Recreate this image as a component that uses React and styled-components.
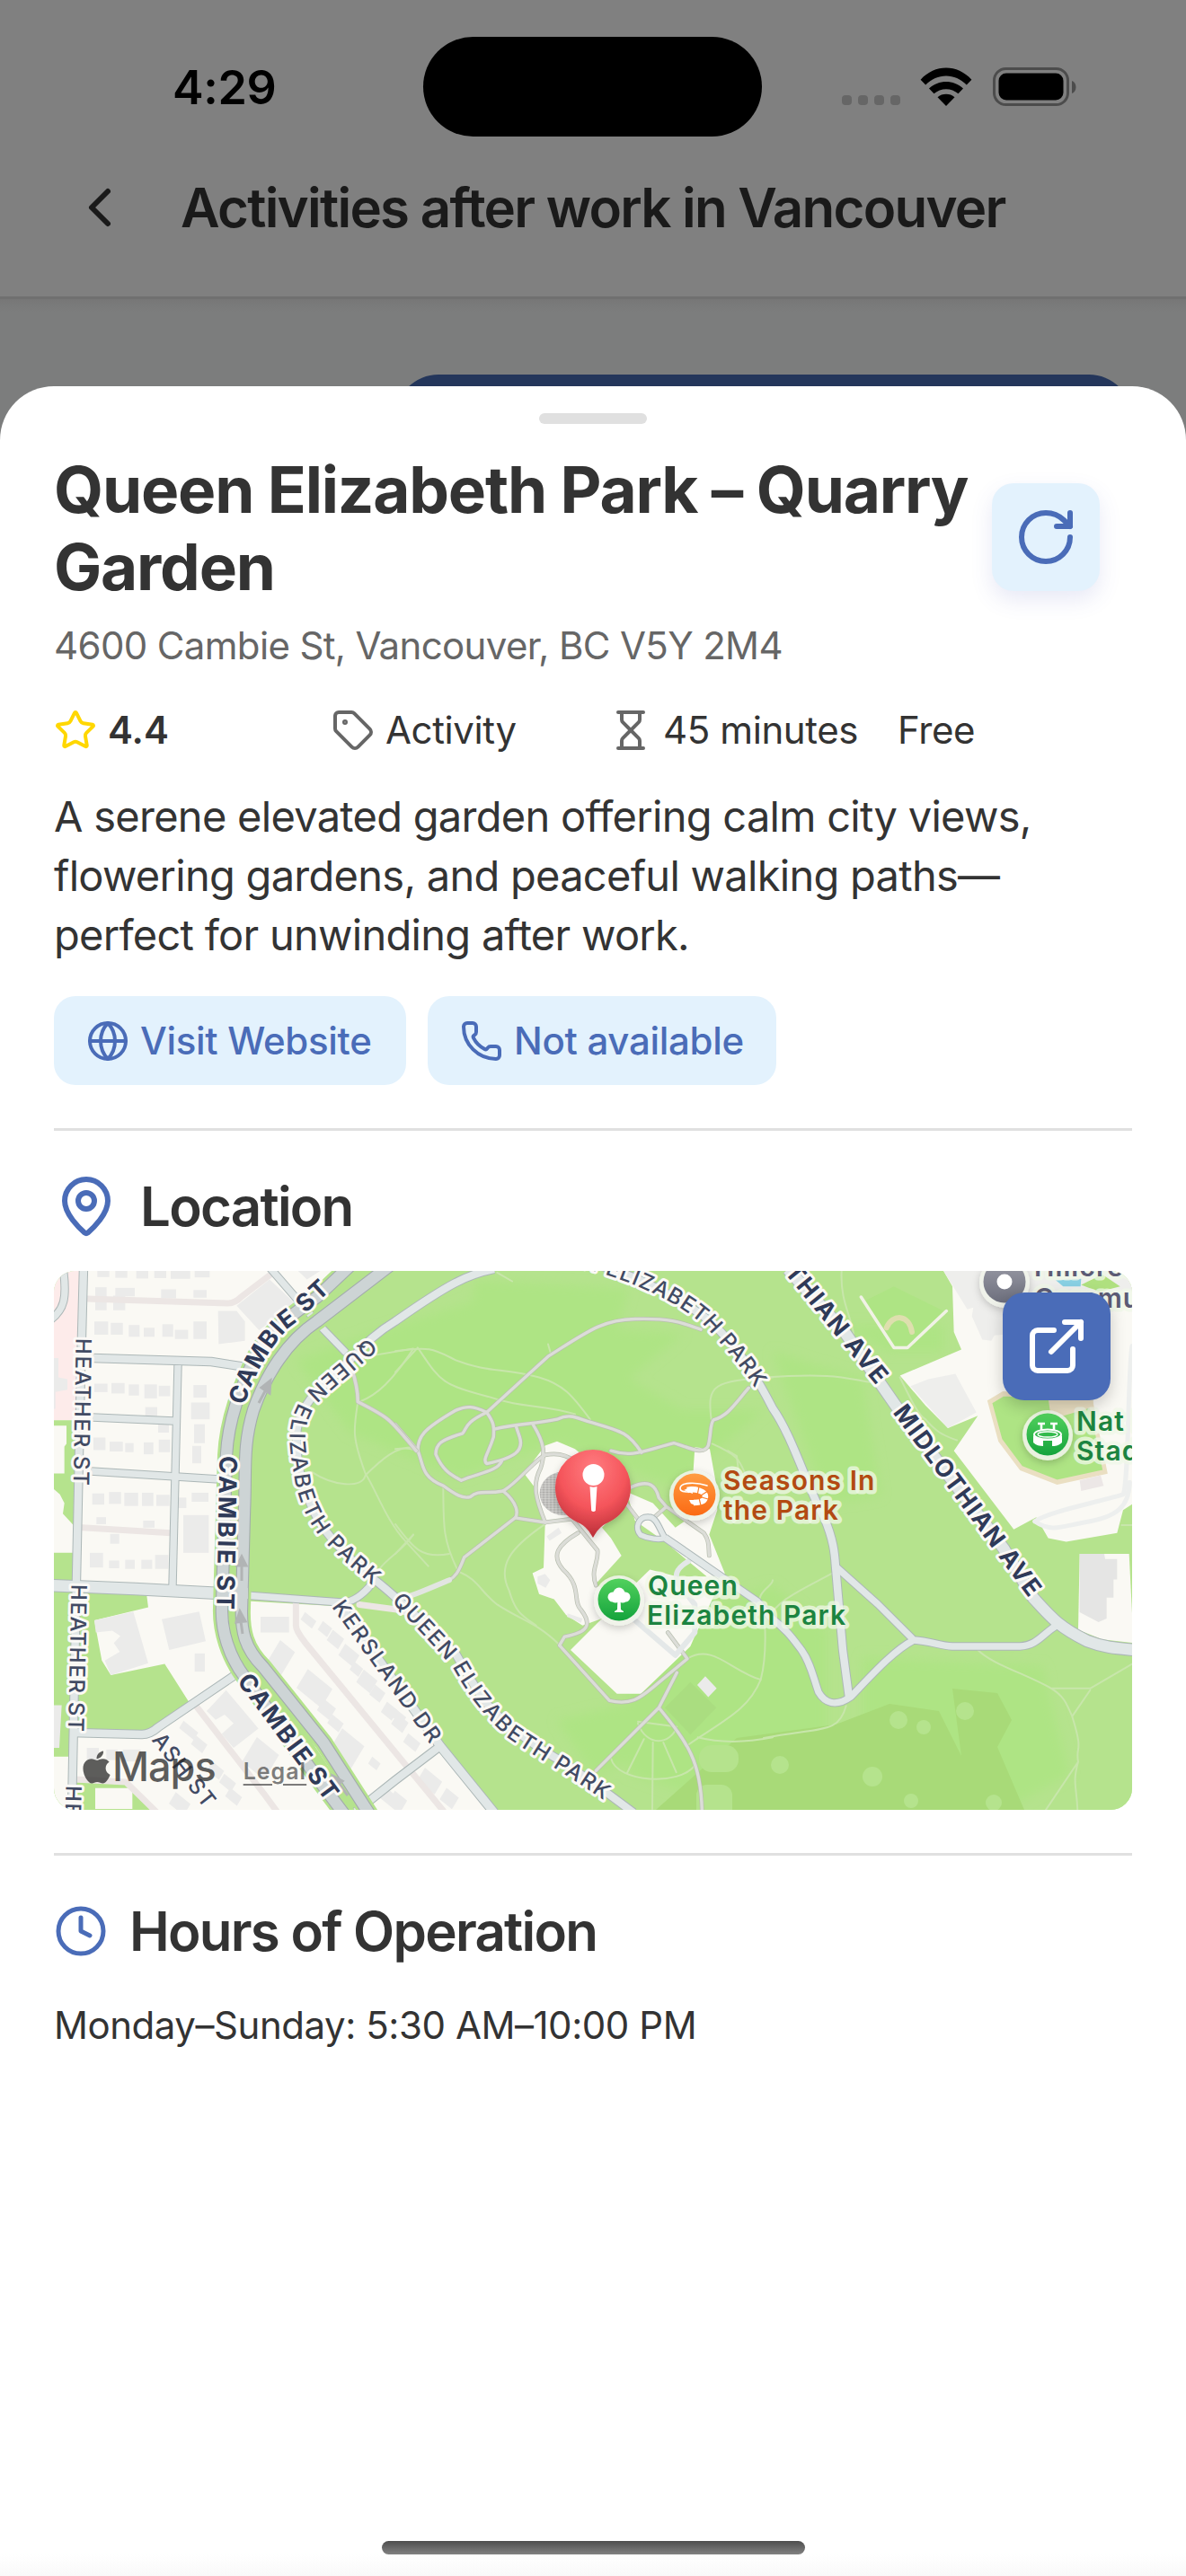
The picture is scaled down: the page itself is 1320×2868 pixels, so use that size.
import React from "react";
import styled, { createGlobalStyle } from "styled-components";
import {
  ChevronLeft,
  RotateCw,
  Star,
  Tag,
  Hourglass,
  Globe,
  Phone,
  MapPin,
  Clock,
  ExternalLink,
} from "lucide-react";
import { FaApple } from "react-icons/fa";

const GlobalStyle = createGlobalStyle`
  *, *::before, *::after { box-sizing: border-box; }
  body {
    margin: 0;
    background: #fff;
    font-family: Inter, "Liberation Sans", sans-serif;
    -webkit-font-smoothing: antialiased;
  }
  h1, h2, p { margin: 0; }
  button { font: inherit; border: 0; padding: 0; }
`;

const Screen = styled.div`
  width: 1320px;
  height: 2868px;
  display: flex;
  flex-direction: column;
  overflow: hidden;
  background: #7c7d7d;
`;

const StatusBar = styled.div`
  height: 193px;
  display: flex;
  align-items: flex-start;
  padding: 41px 121px 0 192px;
  background: #808080;
`;

const Time = styled.div`
  width: 279px;
  padding-top: 26px;
  font-size: 52px;
  line-height: 62px;
  font-weight: 600;
  letter-spacing: -0.4px;
  color: #000;
`;

const Island = styled.div`
  width: 377px;
  height: 111px;
  border-radius: 56px;
  background: #000;
`;

const Indicators = styled.div`
  flex: 1;
  display: flex;
  justify-content: flex-end;
  align-items: flex-end;
  height: 77px;
`;

const SignalDots = styled.div`
  display: flex;
  gap: 7px;
  margin-right: 22px;
  padding-bottom: 1px;
`;

const Dot = styled.span`
  width: 11px;
  height: 11px;
  border-radius: 4px;
  background: #666;
`;

const Battery = styled.svg`
  margin-left: 23px;
`;

const NavHeader = styled.header`
  height: 140px;
  display: flex;
  align-items: flex-start;
  gap: 54px;
  padding: 2px 75px 0;
  background: #808080;
  border-bottom: 3px solid #707070;
  color: #1a1a1a;
`;

const NavTitle = styled.h1`
  font-size: 60px;
  line-height: 72px;
  font-weight: 600;
  letter-spacing: -1.75px;
  white-space: nowrap;
`;

const Conversation = styled.div`
  height: 157px;
  padding: 84px 60px 0;
  display: flex;
  justify-content: flex-end;
  background: linear-gradient(#777 0, #7c7d7d 14px);
`;

const Bubble = styled.div`
  width: 820px;
  height: 73px;
  border-radius: 48px 48px 0 0;
  background: #24365b;
`;

const Sheet = styled.main`
  position: relative;
  flex: 1;
  margin-top: -60px;
  padding: 30px 60px 0;
  border-radius: 60px 60px 0 0;
  display: flex;
  flex-direction: column;
  background: linear-gradient(#fff calc(100% - 24px), #f9f9f9);
  color: #333;
`;

const Handle = styled.div`
  align-self: center;
  width: 120px;
  height: 12px;
  border-radius: 6px;
  background: #e0e0e0;
`;

const TitleRow = styled.div`
  display: flex;
  align-items: flex-start;
  justify-content: space-between;
  margin: 30px 36px 0 0;
`;

const PlaceTitle = styled.h2`
  width: 1040px;
  font-size: 71px;
  line-height: 86px;
  font-weight: 700;
  letter-spacing: -1.2px;
  white-space: nowrap;
`;

const RefreshButton = styled.button`
  width: 120px;
  height: 120px;
  margin-top: 36px;
  display: grid;
  place-items: center;
  border-radius: 24px;
  background: #e3f2fd;
  color: #4a6cb8;
  box-shadow: 0 10px 24px rgba(74, 88, 184, 0.13);
`;

const Address = styled.p`
  margin-top: 20px;
  font-size: 42px;
  line-height: 50px;
  color: #666;
  letter-spacing: -0.65px;
`;

const MetaRow = styled.div`
  display: flex;
  margin-top: 45px;
`;

const MetaItem = styled.div`
  flex: none;
  width: 309px;
  height: 48px;
  display: flex;
  align-items: center;
  color: ${(p) => p.$tint || "#666"};
  white-space: nowrap;
  svg { flex: none; }
  &:last-child { width: 213px; }
`;

const MetaText = styled.span`
  margin-left: 12px;
  font-size: 42px;
  line-height: 48px;
  font-weight: ${(p) => (p.$strong ? 600 : 400)};
  letter-spacing: ${(p) => (p.$strong ? 0 : -0.4)}px;
  color: #333;
`;

const Description = styled.p`
  margin-top: 39px;
  font-size: 47px;
  line-height: 66px;
  letter-spacing: -0.72px;
  white-space: nowrap;
`;

const Actions = styled.div`
  display: flex;
  gap: 24px;
  margin-top: 35px;
`;

const ActionButton = styled.button`
  width: ${(p) => p.$width}px;
  height: 99px;
  display: flex;
  align-items: center;
  gap: 12px;
  padding: 0 36px;
  border-radius: 24px;
  background: #e3f2fd;
  color: #4a6cb8;
  font-size: 42px;
  font-weight: 500;
  letter-spacing: -0.3px;
  white-space: nowrap;
  svg { flex: none; }
`;

const Divider = styled.hr`
  width: 100%;
  height: 3px;
  margin: 48px 0;
  border: 0;
  flex: none;
  background: #e0e0e0;
`;

const SectionHeading = styled.div`
  height: 72px;
  display: flex;
  align-items: center;
  gap: 24px;
  svg { flex: none; color: #4a6cb8; }
`;

const SectionTitle = styled.h2`
  font-size: 60px;
  line-height: 72px;
  font-weight: 600;
  letter-spacing: -1.75px;
`;

const MapCard = styled.div`
  position: relative;
  flex: none;
  height: 600px;
  margin-top: 36px;
  border-radius: 24px;
  overflow: hidden;
  background: #b5e38d;
  > svg { display: block; }
`;

const OpenButton = styled.button`
  position: absolute;
  top: 24px;
  right: 24px;
  width: 120px;
  height: 120px;
  display: grid;
  place-items: center;
  border-radius: 24px;
  background: #4a6cb8;
  color: #fff;
  box-shadow: 0 6px 18px rgba(0, 0, 0, 0.2);
`;

const Attribution = styled.div`
  position: absolute;
  left: 27px;
  bottom: 21px;
  display: flex;
  align-items: center;
  color: rgba(40, 40, 40, 0.75);
`;

const MapsWord = styled.span`
  margin-left: -3px;
  font-size: 45px;
  line-height: 54px;
  font-weight: 500;
  letter-spacing: -1px;
`;

const Legal = styled.span`
  margin: 9px 0 0 31px;
  font-size: 25px;
  line-height: 32px;
  font-weight: 600;
  letter-spacing: 1px;
  text-decoration: underline;
  text-underline-offset: 5px;
  color: rgba(70, 70, 70, 0.7);
`;

const Hours = styled.p`
  margin-top: 44px;
  font-size: 42px;
  line-height: 50px;
  letter-spacing: -0.45px;
`;

const HomeIndicator = styled.div`
  align-self: center;
  width: 471px;
  height: 15px;
  margin: auto 0 24px;
  border-radius: 8px;
  background: linear-gradient(#4d4d4d, #828282);
`;

const MapDrawing = styled.svg`
  font-family: Inter, "Liberation Sans", sans-serif;
  .thin path, .thin polyline { fill: none; vector-effect: non-scaling-stroke; stroke-linecap: round; stroke-linejoin: round; }
  .roads path { fill: none; stroke-linecap: butt; stroke-linejoin: round; }
`;

const StreetName = styled.text`
  font-size: ${(p) => (p.$major ? 27 : 24)}px;
  font-weight: ${(p) => (p.$major ? 650 : 500)};
  fill: ${(p) => (p.$major ? "#2f3a58" : "#414a63")};
  letter-spacing: ${(p) => p.$track ?? 2}px;
  stroke: #fbf9f6;
  stroke-width: 6px;
  stroke-linejoin: round;
  paint-order: stroke;
`;

const PoiName = styled.text`
  font-size: 30px;
  font-weight: 600;
  letter-spacing: 1.1px;
  fill: ${(p) => p.$color};
  stroke: rgba(240, 248, 232, 0.76);
  stroke-width: 9px;
  stroke-linejoin: round;
  paint-order: stroke;
`;

const WEST = "translate(0 -6) scale(.33333 .3891)";
const CENTER = "translate(380 -6) scale(.33333 .3891)";
const EAST = "translate(790 -6) scale(.33333 .3891)";

const localRoads = [
  ["M10 -5 C15 30 12 44 -6 56", 8],
  ["M33 -4 L30 110 L25 344 L20 602", 9],
  ["M43 97 L175 101 L240 111", 9],
  ["M43 163 L133 167", 8],
  ["M41 223 L184 232", 8],
  ["M138 105 L132 351", 8],
  ["M-4 350 L90 354 L185 359", 13],
  ["M20 514 L98 516 Q107 516 116 508 L200 451", 9],
  ["M240 -4 L297 62 L325 91", 8],
  ["M212 361 L320 369 Q338 370 358 343", 8],
  ["M318 372 L430 529 L490 603", 10],
  ["M430 529 L380 567 L336 602", 9],
  ["M490 -2 C460 4 440 14 380 56 C350 74 340 90 310 118 C284 140 270 160 270 185 C270 215 276 240 286 260 C297 290 330 322 357 344 C385 365 412 394 447 426 C460 448 470 468 487 488 C510 512 545 535 567 547 L610 577 L645 603", 9],
  ["M600 -8 C650 5 700 32 733 58 C758 84 776 106 800 153 C822 184 838 240 857 274 C868 300 869 315 870 329 L878 422 L885 475", 9],
  ["M870 329 L917 371 L957 411 C975 412 985 417 1000 418 L1075 418 C1095 417 1100 404 1117 394", 8],
  ["M957 411 C935 422 910 450 887 474 C870 486 858 481 851 469 C845 452 842 436 832 422 C822 409 816 400 798 386 L783 368 L680 297", 8],
  ["M817 -2 L880 68 L937 150 L1057 309 L1090 364 C1110 386 1118 396 1150 412 C1168 419 1180 420 1204 422", 13],
  ["M680 297 C675 300 661 298 653 294 C646 287 650 273 662 274 C671 274 674 288 680 297", 6],
];

const cambie = [
  "M330 -6 L293 29 C260 52 238 68 224 96 C208 130 194 165 192 205 L190 270 L187 375 C186 400 195 430 213 453 L300 574 L324 606",
  "M374 -6 L293 56 C260 78 236 115 222 155 C210 195 214 220 212 266 L209 375 C208 400 212 420 233 441 L300 525 L352 606",
];

const parkPaths = [
  "M0 455 L75 530 C95 570 85 605 160 630 C200 655 225 668 250 662 C280 640 300 655 360 645 C410 620 460 560 500 542 C540 535 570 540 600 560 M720 530 C790 550 830 530 930 508 C980 520 1030 545 1045 515 C1055 480 1050 455 1062 442 C1110 430 1130 400 1180 350",
  "M75 530 C75 490 90 470 200 415 C240 400 260 402 305 420 C330 450 330 460 328 490 C310 540 290 555 305 567 C400 550 430 530 415 490 L403 460",
  "M305 420 C230 450 240 465 225 480 C150 500 135 510 135 540 C160 590 190 600 220 615 C270 595 340 590 355 560 M330 468 C420 450 460 455 540 440 C590 420 610 440 660 450 C760 475 780 480 822 535",
  "M305 420 L510 260 C640 190 690 155 800 153 C930 150 960 165 1020 183",
  "M460 455 C500 510 500 540 485 580 C455 630 470 670 500 735 M360 645 C410 680 410 710 400 722 L230 835 C210 880 200 890 180 900",
  "M400 722 L500 735 L590 725 L675 815 C680 850 650 870 670 915 M610 765 C540 800 520 830 560 870 C625 920 590 960 620 985 C660 1030 640 1050 565 1062 L548 1087 L715 1245 C790 1260 820 1235 870 1200 L975 1125 L910 1050",
  "M785 635 C850 610 870 630 880 665 L905 690 L1030 765 C1050 790 1045 805 1048 830 M905 690 L865 720 M770 680 L810 725",
  "M940 1165 L880 1265 L670 1445 M880 1265 C980 1370 1020 1420 1024 1560",
];

const footpaths = [
  "M0 245 C120 230 130 240 200 270 C320 310 350 290 480 320 C560 340 590 370 650 440",
  "M75 235 C150 330 150 340 310 375 C430 410 480 395 600 425 M75 235 L0 305",
  "M0 525 C40 520 70 525 80 540 M160 630 C160 750 160 790 210 875 C280 900 280 930 340 970 C430 1020 470 1020 548 1085",
  "M0 740 C60 810 90 840 180 825 M500 740 C380 810 340 860 380 930 C400 990 420 1000 470 1030 M0 825 L60 770",
  "M1055 440 C1040 340 1060 330 1260 320 M1058 510 C1150 545 1150 560 1170 600 M510 225 L520 255",
  "M975 1125 C1060 1080 1120 1160 1220 1185 C1240 1120 1240 1000 1220 980 C1200 930 1260 920 1260 900",
  "M1220 1185 C1180 1270 1100 1300 980 1370 M1010 1350 C1100 1370 1200 1360 1260 1350",
  "M720 1410 C740 1480 950 1490 1000 1430 M810 1310 C840 1380 920 1370 940 1320 L810 1305 M830 1355 L775 1450 M860 1365 L858 1555 M895 1365 L938 1450",
  "M340 20 L390 45 M1110 530 L1140 545 L1150 620",
];

const houses = [
  [145, 15, 40, 18], [205, 15, 40, 20], [275, 15, 40, 22], [335, 12, 40, 24], [390, 12, 65, 26], [470, 12, 50, 22], [138, 62, 38, 66], [205, 64, 65, 24], [198, 86, 40, 42], [358, 68, 50, 26], [466, 70, 44, 22],
  [135, 160, 46, 38], [190, 164, 40, 34], [250, 170, 36, 34], [300, 178, 36, 26], [362, 168, 36, 36], [404, 184, 44, 26], [466, 160, 44, 50],
  [135, 338, 44, 24], [192, 336, 44, 30], [250, 340, 34, 32], [302, 340, 42, 40], [350, 344, 38, 30], [305, 405, 40, 26], [348, 454, 36, 24],
  [132, 492, 40, 36], [186, 504, 44, 28], [238, 508, 28, 26], [300, 506, 32, 34], [350, 498, 38, 36], [466, 342, 44, 36], [458, 392, 62, 48], [468, 454, 36, 54], [462, 516, 30, 50],
  [128, 652, 40, 32], [184, 648, 40, 34], [235, 650, 46, 38], [294, 650, 38, 38], [342, 656, 44, 32], [414, 664, 28, 30], [460, 650, 56, 26], [432, 714, 85, 108],
  [142, 720, 32, 20], [298, 730, 38, 20], [188, 768, 30, 28], [120, 822, 44, 42], [184, 844, 34, 22], [238, 842, 32, 26], [292, 842, 36, 26], [338, 828, 44, 40],
  [470, 1110, 34, 52], [690, 1005, 95, 45], [110, 1380, 40, 34], [175, 1385, 38, 30], [230, 1385, 60, 34],
];

const slantedHouses = [
  [850, 1015, 46, 26], [905, 1040, 38, 30], [940, 1070, 46, 36], [985, 1115, 58, 40], [1010, 1155, 36, 28], [1045, 1190, 56, 44], [1080, 1225, 42, 34], [1120, 1275, 44, 36], [1155, 1310, 46, 36], [910, 1270, 50, 40], [940, 1310, 46, 30], [870, 1210, 100, 66], [755, 1125, 60, 88], [975, 1385, 90, 86], [450, 1330, 60, 26], [485, 1370, 46, 30], [540, 1445, 48, 30], [580, 1480, 48, 30], [600, 1520, 48, 30], [1070, 1425, 34, 24], [1130, 1530, 80, 36], [690, 1410, 90, 86], [420, 1540, 60, 40],
  [1150, 1290, 46, 26], [1195, 1365, 50, 30], [1255, 1475, 70, 44], [1320, 1525, 50, 40], [1150, 1530, 50, 32],
];

function Building({ box, angle }) {
  const [x, y, w, h] = box;
  return angle ? (
    <rect x={x - w / 2} y={y - h / 2} width={w} height={h} transform={`rotate(${angle} ${x} ${y})`} />
  ) : (
    <rect x={x} y={y} width={w} height={h} />
  );
}

function PoiBadge({ x, y, fill, children }) {
  return (
    <g transform={`translate(${x} ${y})`}>
      <circle r="28" cy="1" fill="#f1f5ec" fillOpacity=".88" filter="url(#soft)" />
      <circle r="23.5" fill={fill} />
      {children}
    </g>
  );
}

function ParkMap() {
  return (
    <MapDrawing width="1200" height="600" viewBox="0 0 1200 600">
      <defs>
        <linearGradient id="orange" x2="0" y2="1"><stop stopColor="#ff9d43" /><stop offset="1" stopColor="#fb6a14" /></linearGradient>
        <linearGradient id="green" x2="0" y2="1"><stop stopColor="#52d15d" /><stop offset="1" stopColor="#14a33c" /></linearGradient>
        <linearGradient id="gray" x2="0" y2="1"><stop stopColor="#9a9ba6" /><stop offset="1" stopColor="#6d6f7d" /></linearGradient>
        <radialGradient id="pin" cx=".5" cy=".22" r=".8"><stop stopColor="#ff7c80" /><stop offset=".55" stopColor="#f5555b" /><stop offset="1" stopColor="#b52a35" /></radialGradient>
        <filter id="soft" x="-40%" y="-40%" width="180%" height="180%"><feDropShadow dx="0" dy="3" stdDeviation="4" floodOpacity=".22" /></filter>
        <filter id="haze" x="-20%" y="-20%" width="140%" height="140%"><feGaussianBlur stdDeviation="6" /></filter>
        <pattern id="speckle" width="4" height="4" patternUnits="userSpaceOnUse"><rect width="4" height="4" fill="#c4c3c0" /><rect width="1.5" height="1.5" fill="#8f8e8c" /><rect x="2" y="2" width="1.5" height="1.5" fill="#e6e5e2" /></pattern>
        <path id="heatherA" d="M33 75 L30 260" />
        <path id="heatherB" d="M28 349 L24 535" />
        <path id="heatherC" d="M22 573 L18 700" />
        <path id="cambieA" d="M203 147 C215 105 245 62 262 51 L340 -21" />
        <path id="cambieB" d="M194 206 L190 410" />
        <path id="cambieC" d="M211 451 L345 632" />
        <path id="queenA" d="M355 80 C335 101 310 118 288 140 C262 172 272 200 277 235 C283 257 288 270 300 287 C320 312 345 330 375 357 L390 370" />
        <path id="queenB" d="M382 362 C405 387 430 412 453 440 C470 470 485 490 513 515 C545 537 575 552 660 612" />
        <path id="queenC" d="M440 -35 C600 -24 690 18 733 58 C755 82 775 106 788 127" />
        <path id="kersland" d="M316 369 L450 556" />
        <path id="midA" d="M721 -126 L924 123" />
        <path id="midB" d="M941 152 L1130 409" />
        <path id="ash" d="M115 517 L205 633" />
      </defs>

      <rect width="1200" height="600" fill="#b5e38d" />
      <g fill="#aee484" filter="url(#haze)">
        <path d="M270 100 L350 70 L480 30 L560 60 L700 70 L640 120 L700 155 L790 155 L690 240 L560 190 L450 230 L330 180 Z" />
        <path d="M640 400 L800 350 L860 400 L860 520 L760 600 L640 560 Z" />
        <path d="M900 430 L1100 440 L1130 560 L1060 600 L900 520 Z" />
        <path d="M470 10 L640 20 L620 90 L450 110 Z" />
        <path d="M800 90 L900 120 L920 250 L860 260 Z" />
        <path d="M870 60 L990 60 L990 90 L930 90 Z" />
        <path d="M560 500 L690 470 L720 520 L600 560 Z" />
      </g>
      <path d="M670 600 L760 520 L870 505 L930 482 L985 490 L1010 540 L1000 465 L1050 470 L1066 500 L1050 530 L1080 600 Z" fill="#a8da78" />
      <g fill="#b5e38d"><circle cx="940" cy="500" r="10" /><circle cx="968" cy="508" r="8" /><circle cx="1014" cy="490" r="10" /><circle cx="808" cy="550" r="10" /><circle cx="911" cy="563" r="11" /><circle cx="954" cy="590" r="8" /><circle cx="1046" cy="592" r="9" /><rect x="718" y="528" width="44" height="30" rx="14" /><rect x="715" y="572" width="40" height="40" rx="12" /></g>

      <g transform={WEST}>
        <path fill="#faf9f4" d="M0 0 H980 L760 160 L640 340 L580 480 L560 940 L0 925 Z" />
        <path fill="#fdebea" d="M0 0 H100 L95 250 L85 443 H0 Z" />
        <path fill="#b5e38d" d="M0 443 H75 L65 925 H0 Z" />
        <path fill="#faf9f4" d="M0 458 H42 V510 L35 518 V595 H0 Z M0 640 L20 655 L35 680 L30 710 L68 745 V822 H0 Z" />
        <path fill="#faf9f4" d="M310 945 H560 L590 1120 L950 1560 H340 L240 1485 L70 1478 L75 1330 L320 1335 L450 1248 L370 1140 L190 1172 L160 1130 L135 1015 L315 978 Z" />
        <path fill="#faf9f4" d="M138 1495 H262 V1555 H138 Z M0 1405 H50 V1560 H0 Z" />
        <path fill="#faf9f4" d="M645 960 L945 975 L1300 1400 L1480 1580 H1030 L650 1090 Z" />
        <g fill="#ebebea">
          <path d="M610 115 L720 40 L805 108 L685 185 Z M548 130 H610 L638 160 V215 L550 225 Z M815 15 H890 L845 40 Z" />
          <path d="M135 1015 L265 990 L315 1138 L190 1172 L170 1130 L220 1105 L200 1080 L222 1060 L195 1045 L140 1050 Z M360 1012 L485 990 L507 1075 L385 1100 Z M510 1275 L575 1215 L683 1325 L600 1380 L560 1340 L600 1310 L570 1285 L540 1300 Z M0 1258 H26 L18 1380 H0 Z M0 265 H15 V320 L45 325 V355 L5 362 V410 H0 Z" />
          {houses.map((b, i) => <Building key={i} box={b} />)}
          {slantedHouses.map((b, i) => <Building key={i} box={b} angle={35} />)}
        </g>
      </g>

      <g transform={CENTER}>
        <path fill="#faf9f4" d="M430 595 L500 515 L540 503 L600 525 L780 650 L860 680 L935 750 L985 720 L1000 520 L1050 525 L1070 620 L1075 700 L1048 770 L1100 880 L1000 1060 L985 1090 L820 1225 L740 1225 L585 1100 L690 1010 L625 1030 L570 1000 L530 955 L480 940 L458 880 L495 865 L500 740 L470 640 Z" />
        <path fill="#b5e38d" d="M690 750 L780 670 L800 730 L900 790 L1040 890 L940 890 L850 870 L790 920 L755 890 L700 925 L665 915 L755 830 L720 780 Z" />
        <ellipse cx="560" cy="652" rx="78" ry="62" fill="url(#speckle)" />
        <g fill="#ebebea"><path d="M505 775 L545 750 L555 765 L515 788 Z M475 890 L500 882 L517 900 L502 922 L475 910 Z M575 995 L625 1010 L620 1022 L573 1005 Z M1008 1200 L1035 1175 L1073 1210 L1045 1235 Z" /></g>
        <path fill="#aadd80" d="M900 1265 L985 1192 L1072 1265 L985 1342 Z" />
      </g>

      <g transform={EAST}>
        <path fill="#faf9f4" d="M590 0 L630 60 L635 190 L660 240 L455 315 L540 400 L615 465 L715 430 L635 530 L835 755 L910 720 L950 780 L1010 790 L1180 765 L1200 700 L1235 680 V0 Z" />
        <path fill="#eeeeec" d="M600 15 H1235 V70 L900 100 V190 L770 200 L760 215 L730 212 L695 145 L700 120 L680 125 Z M490 345 L550 325 L640 310 L710 420 L615 465 Z" />
        <path fill="#88cfe2" d="M975 42 L1060 38 L1058 60 H1000 Z" />
        <path fill="#afe07f" d="M1060 55 L1130 25 L1190 60 L1120 75 Z" />
        <path fill="#aee484" stroke="#eadfc2" strokeWidth="14" d="M755 390 L800 367 L1090 380 L1140 590 L980 620 L860 580 L790 500 Z" />
        <path fill="#eadfc2" d="M950 380 H1100 V405 L960 440 Z" />
        <path fill="#faf9f4" d="M1055 825 L1220 825 L1235 1080 L1130 1070 L1050 1042 Z" />
        <path fill="#e5e5e4" d="M1055 825 H1137 L1140 840 H1180 V898 H1168 V950 H1145 V1010 L1118 1020 L1055 992 Z" />
        <path fill="#ece7e6" d="M1055 615 L1125 600 L1135 630 L1060 645 Z" />
        <path fill="#aee484" d="M340 100 L435 60 L600 130 L480 236 L435 232 Z" />
        <g className="thin">
          <path d="M325 90 L435 235 H480 L610 130" stroke="#f1f2e6" strokeWidth="3.5" />
          <path d="M410 178 C430 138 485 138 495 190" stroke="#dedfae" strokeWidth="6" />
          <path d="M905 732 C950 705 1100 680 1200 655 C1220 620 1215 300 1230 230 M905 732 C960 765 1000 745 1070 735 C1180 720 1220 690 1222 620" stroke="#edefee" strokeWidth="5" />
        </g>
      </g>

      <g className="thin" transform={WEST} stroke="#ece6e4" strokeWidth="7">
        <path d="M110 95 L580 108 Q605 108 625 90 L740 15" />
        <path d="M95 750 L390 765" />
        <path d="M470 1255 L700 1510 L760 1580" />
        <path d="M808 965 V1030 Q808 1045 840 1080 L1300 1560" />
        <path d="M70 1470 L240 1478 L350 1570 M1020 970 L1150 985 L1200 1000" />
      </g>
      <g className="thin" transform={CENTER} stroke="#c8e6ab" strokeWidth="2">
        {footpaths.map((d) => <path key={d} d={d} />)}
      </g>
      <g className="thin" transform={WEST} stroke="#c8e6ab" strokeWidth="2">
        <path d="M1015 390 C1000 470 995 490 1040 595 C1080 650 1110 730 1175 790 L1250 860 M860 590 C930 630 1030 640 1040 600 C1100 550 1140 520 1200 520 M1060 258 L1200 238 C1130 330 1080 370 1020 390 M1085 870 C1120 830 1160 820 1200 770" />
      </g>
      <g className="thin" transform={EAST} stroke="#c8e6ab" strokeWidth="2">
        <path d="M260 15 C255 100 290 140 300 195 M0 320 C250 305 280 325 365 335 M455 320 C500 400 520 430 540 440 C580 480 600 485 645 500" />
        <path d="M0 1352 C200 1320 250 1340 275 1260 M230 880 C100 940 60 950 0 1020 M715 1100 C760 1140 880 1170 960 1210 H1090 L1230 1140 M960 1210 C1000 1230 1010 1250 1030 1290 C1070 1400 1040 1370 1050 1420 L940 1560 M1090 1215 L1030 1290 M1050 1420 C1030 1480 1045 1490 1048 1560 M1195 743 H1235" />
      </g>
      <g className="thin" transform={CENTER}>
        <g stroke="#b9bfb0" strokeWidth="4.8">{parkPaths.map((d) => <path key={d} d={d} />)}</g>
        <g stroke="#dcddd8" strokeWidth="3.4">{parkPaths.map((d) => <path key={d} d={d} />)}</g>
        <path d="M180 900 C150 910 100 930 50 945 L0 965" stroke="#e2e5e1" strokeWidth="6" />
        <path d="M980 845 C930 870 935 890 945 910 L1000 970 V1050 L935 1115 L800 1015" stroke="#e4e8e8" strokeWidth="6" />
      </g>
      <g className="thin" transform={WEST}>
        <path d="M970 245 C1000 300 1015 350 1015 390 C1130 440 1120 440 1210 530" stroke="#bdc4b4" strokeWidth="5" />
        <path d="M970 245 C1000 300 1015 350 1015 390 C1130 440 1120 440 1210 530" stroke="#dcd9d8" strokeWidth="3.6" />
      </g>

      <g className="roads">
        <g stroke="#acb7b7">{localRoads.map(([d, w]) => <path key={d} d={d} strokeWidth={w + 1.4} />)}</g>
        <g stroke="#e1e7e7">{localRoads.map(([d, w]) => <path key={d} d={d} strokeWidth={w - 0.6} />)}</g>
        <g stroke="#b5e38d" strokeWidth="20">{cambie.map((d) => <path key={d} d={d} />)}</g>
        <g stroke="#a3abad" strokeWidth="14.5">{cambie.map((d) => <path key={d} d={d} />)}</g>
        <g stroke="#cdd4d5" strokeWidth="12.3">{cambie.map((d) => <path key={d} d={d} />)}</g>
        <path d="M185 359 H216" stroke="#cdd4d5" strokeWidth="12" />
      </g>
      <g stroke="#b1b4b5" strokeWidth="3" fill="#b1b4b5">
        <path d="M228 147 L236 132 M231 130 L241 122 L240 136 Z" />
        <path d="M209 345 V328 M204 328 L209 318 L214 328 Z" />
        <path d="M210 404 L208 390 M203 391 L207 379 L213 390 Z" />
        <path d="M327 584 L318 572 M312 575 L310 562 L321 568 Z" />
      </g>

      {[
        ["heatherA", "HEATHER ST", 1.7], ["heatherB", "HEATHER ST", 1.7], ["heatherC", "HEATHER ST", 1.7],
        ["queenA", "QUEEN ELIZABETH PARK", 2.1], ["queenB", "QUEEN ELIZABETH PARK", 1.9],
        ["kersland", "KERSLAND DR", 2.1], ["ash", "ASH ST", 1.9],
      ].map(([id, name, track]) => (
        <StreetName key={id} $track={track} dy="8.5"><textPath href={`#${id}`}>{name}</textPath></StreetName>
      ))}
      <StreetName $track={1.6} dy="8.5" textAnchor="end"><textPath href="#queenC" startOffset="100%">QUEEN ELIZABETH PARK</textPath></StreetName>
      {[["cambieA", "CAMBIE ST", 2.4], ["cambieB", "CAMBIE ST", 2.8], ["cambieC", "CAMBIE ST", 2.4], ["midB", "MIDLOTHIAN AVE", 1.7]].map(([id, name, track]) => (
        <StreetName key={id} $major $track={track} dy="9.5"><textPath href={`#${id}`}>{name}</textPath></StreetName>
      ))}
      <StreetName $major $track={1.9} dy="9.5" textAnchor="end"><textPath href="#midA" startOffset="100%">MIDLOTHIAN AVE</textPath></StreetName>

      <PoiBadge x={1058} y={12} fill="url(#gray)"><circle r="8.5" fill="#fff" /></PoiBadge>
      <PoiName $color="#5c5b75" x="1091" y="6">Hillcrest</PoiName>
      <PoiName $color="#5c5b75" x="1091" y="41">Community</PoiName>

      <PoiBadge x={1106} y={182} fill="url(#green)">
        <g fill="none" stroke="#fff" strokeWidth="2">
          <ellipse cy="0" rx="15" ry="5.5" /><ellipse cy="0" rx="11" ry="3" strokeWidth="1.3" />
          <path d="M-11 -12 H-3 M3 -12 H11 M-7 -12 V-5 M7 -12 V-5" strokeWidth="2.6" />
        </g>
        <path d="M-16 1 C-12 7 12 7 16 1 V9 C12 13 8 13 5 13 V7 H-5 V13 C-9 13 -13 12 -16 9 Z" fill="#fff" />
      </PoiBadge>
      <PoiName $color="#1c8440" x="1138" y="178">Nat Bailey</PoiName>
      <PoiName $color="#1c8440" x="1138" y="211">Stadium</PoiName>

      <PoiBadge x={713} y={249} fill="url(#orange)">
        <g fill="none" stroke="#fff" strokeLinecap="round">
          <path d="M14 -10 C2 -14 -16 -14 -16 -7 C-16 -3 -11 -3 -7 -3" strokeWidth="1.6" />
          <path d="M-8 -5 C0 -7 12 -4 12 2 C12 8 6 9 -1 9" strokeWidth="6.5" strokeLinecap="butt" />
        </g>
        <path d="M-12 -5 L-3 -9 L-2 -1 Z M-6 6 L2 6 L1 12 L-4 10 Z" fill="#fff" />
        <path d="M5 -9 L3 1 M15 -4 L7 1 M15 5 L8 3 M7 12 L5 4" stroke="#fb8029" strokeWidth="1.2" />
      </PoiBadge>
      <PoiName $color="#b34a12" x="745" y="244">Seasons In</PoiName>
      <PoiName $color="#b34a12" x="745" y="277">the Park</PoiName>

      <PoiBadge x={629} y={366} fill="url(#green)">
        <g fill="#fff">
          <circle cx="0" cy="-7" r="6.5" /><circle cx="-7" cy="-3" r="5.5" /><circle cx="7" cy="-3" r="5.5" /><circle cx="-4" cy="-1" r="4.5" /><circle cx="4" cy="-1" r="4.5" />
          <path d="M-1.6 -1 H1.6 L2 11 L5 13 V14 H-5 V13 L-2 11 Z" />
        </g>
      </PoiBadge>
      <PoiName $color="#1c8440" x="661" y="361">Queen</PoiName>
      <PoiName $color="#1c8440" x="660" y="394">Elizabeth Park</PoiName>

      <g filter="url(#soft)">
        <path d="M600 297 C596 290 592 284 583 280 C568 273 558 259 558 241 A42 42 0 0 1 642 241 C642 259 632 273 617 280 C608 284 604 290 600 297 Z" fill="url(#pin)" />
      </g>
      <circle cx="600.5" cy="227" r="12" fill="#fff" />
      <path d="M596.5 240 Q600.5 241.5 604.5 240 L602.8 267 Q600.5 269 598.2 267 Z" fill="#fff" />
    </MapDrawing>
  );
}

export default function App() {
  return (
    <>
      <GlobalStyle />
      <Screen>
        <StatusBar>
          <Time>4:29</Time>
          <Island />
          <Indicators>
            <SignalDots><Dot /><Dot /><Dot /><Dot /></SignalDots>
            <svg width="58" height="43" viewBox="0 0 58 43">
              <path d="M29 43 L19.5 33.2 C24.5 28.6 33.5 28.6 38.5 33.2 Z" />
              <path d="M10 23.6 C20.5 13.4 37.5 13.4 48 23.6 L42.5 29.3 C35 22.4 23 22.4 15.5 29.3 Z" />
              <path d="M0.6 13.8 C16.5 -3.8 41.5 -3.8 57.4 13.8 L51.8 19.6 C39 6.2 19 6.2 6.2 19.6 Z" />
            </svg>
            <Battery width="94" height="43" viewBox="0 0 94 43">
              <rect x="1.5" y="1.5" width="82" height="40" rx="13" fill="none" stroke="#4c4c4c" strokeWidth="3" />
              <rect x="6.5" y="6.5" width="72" height="30" rx="8.5" />
              <path d="M88 15 C94 17 94 27 88 29 Z" fill="#4c4c4c" />
            </Battery>
          </Indicators>
        </StatusBar>
        <NavHeader>
          <ChevronLeft size={72} />
          <NavTitle>Activities after work in Vancouver</NavTitle>
        </NavHeader>
        <Conversation><Bubble /></Conversation>

        <Sheet>
          <Handle />
          <TitleRow>
            <PlaceTitle>Queen Elizabeth Park – Quarry<br />Garden</PlaceTitle>
            <RefreshButton><RotateCw size={72} /></RefreshButton>
          </TitleRow>
          <Address>4600 Cambie St, Vancouver, BC V5Y 2M4</Address>
          <MetaRow>
            <MetaItem $tint="#ffd700"><Star size={48} /><MetaText $strong>4.4</MetaText></MetaItem>
            <MetaItem><Tag size={48} /><MetaText>Activity</MetaText></MetaItem>
            <MetaItem><Hourglass size={48} /><MetaText>45 minutes</MetaText></MetaItem>
            <MetaItem><MetaText>Free</MetaText></MetaItem>
          </MetaRow>
          <Description>
            A serene elevated garden offering calm city views,<br />
            flowering gardens, and peaceful walking paths—<br />
            perfect for unwinding after work.
          </Description>
          <Actions>
            <ActionButton $width={392}><Globe size={48} />Visit Website</ActionButton>
            <ActionButton $width={388}><Phone size={48} />Not available</ActionButton>
          </Actions>
          <Divider />
          <SectionHeading><MapPin size={72} /><SectionTitle>Location</SectionTitle></SectionHeading>
          <MapCard>
            <ParkMap />
            <Attribution>
              <FaApple size={41} />
              <MapsWord>Maps</MapsWord>
              <Legal>Legal</Legal>
            </Attribution>
            <OpenButton><ExternalLink size={72} /></OpenButton>
          </MapCard>
          <Divider />
          <SectionHeading><Clock size={60} /><SectionTitle>Hours of Operation</SectionTitle></SectionHeading>
          <Hours>Monday–Sunday: 5:30 AM–10:00 PM</Hours>
          <HomeIndicator />
        </Sheet>
      </Screen>
    </>
  );
}
